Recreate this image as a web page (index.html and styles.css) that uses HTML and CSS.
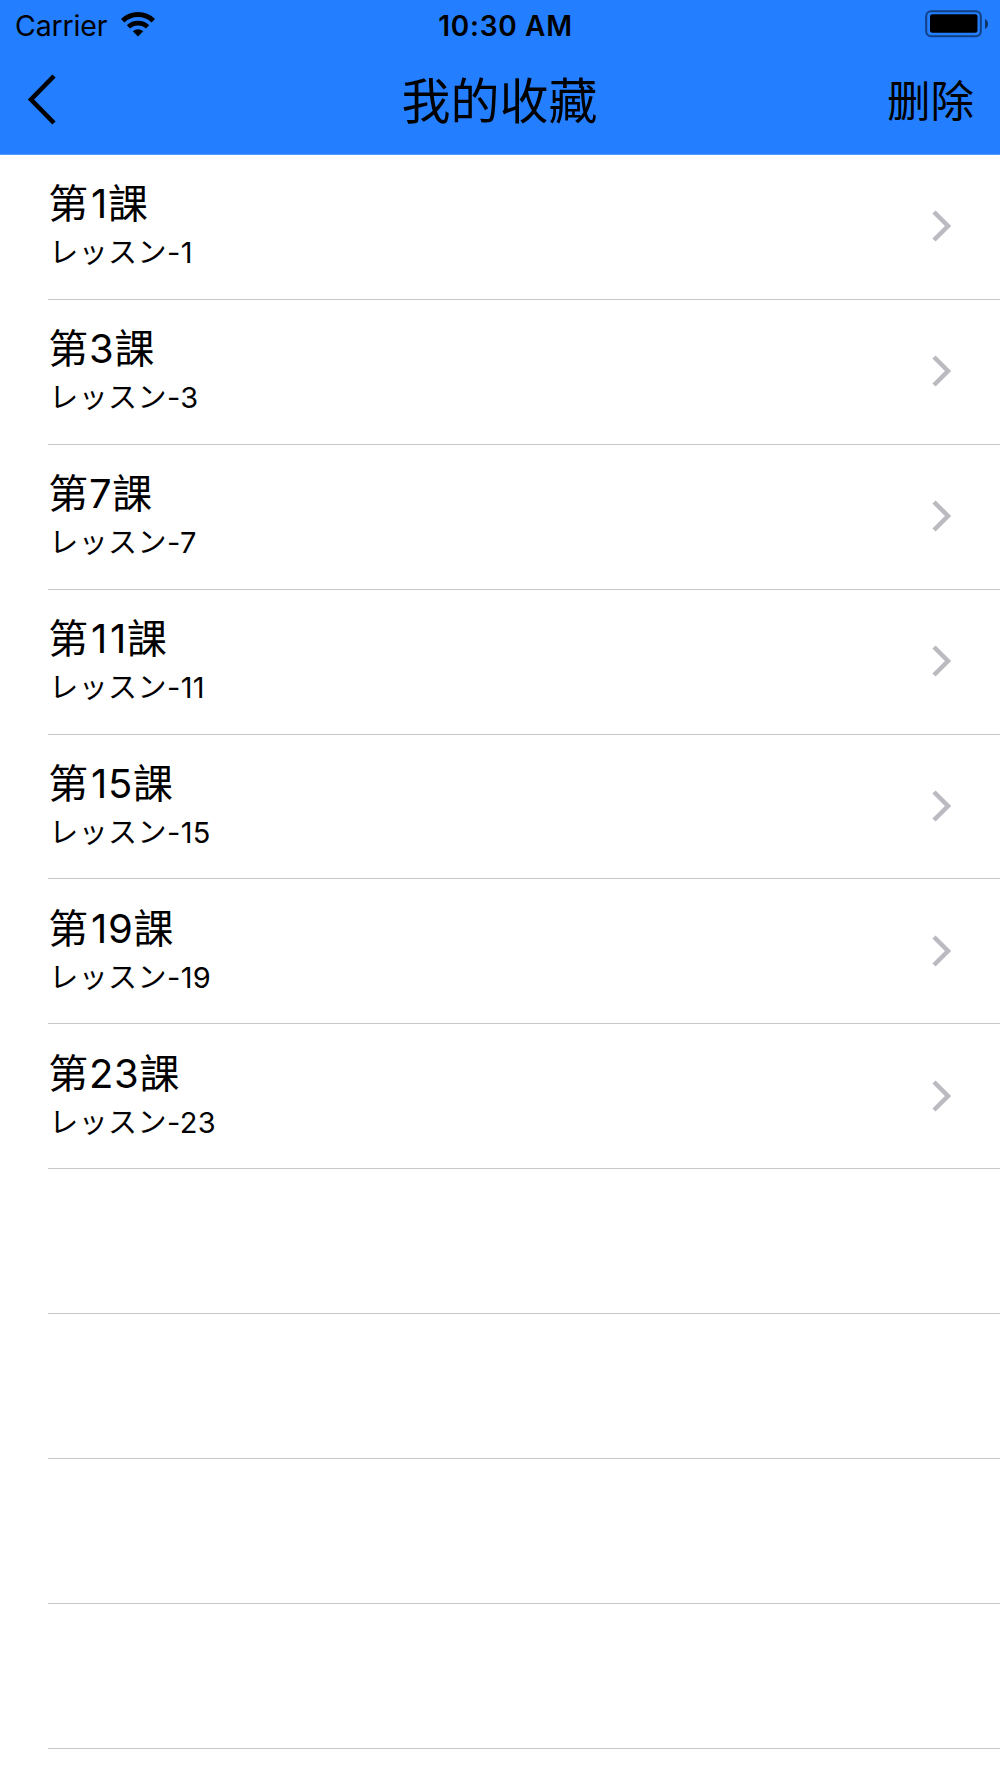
FILE: index.html
```html
<!DOCTYPE html>
<html lang="zh-CN">
<head>
<meta charset="utf-8">
<title>我的收藏</title>
<link rel="stylesheet" href="styles.css">
</head>
<body>
<header class="header">
  <div class="status">
    <div class="network">
      <span class="carrier">Carrier</span>
      <svg class="wifi" width="34" height="25" viewBox="0 0 34 25" fill="none" stroke="#000">
        <path d="M1.7 8.7a22 22 0 0 1 30.6 0" stroke-width="4.9"/>
        <path d="M7.4 14.9a14 14 0 0 1 19.2 0" stroke-width="4.7"/>
        <path d="M17 24.5l-5.2-5.3a7.6 7.6 0 0 1 10.4 0z" fill="#000" stroke="none"/>
      </svg>
    </div>
    <span class="time">10:30 AM</span>
    <svg class="battery" width="64" height="28" viewBox="0 0 64 28">
      <rect x="1.2" y="1.2" width="54.6" height="25" rx="5" fill="none" stroke="#000" stroke-opacity=".5" stroke-width="2"/>
      <rect x="5" y="4.3" width="47.5" height="18.5" rx="2.4"/>
      <path d="M60 9q3 1.3 3 5t-3 5z" fill-opacity=".6"/>
    </svg>
  </div>
  <nav class="nav">
    <svg class="back" width="30" height="52" viewBox="0 0 30 52" fill="none" stroke="#000" stroke-width="4.6"><path d="M27 2L4 25.5 27 49"/></svg>
    <h1 class="title">我的收藏</h1>
    <span class="delete">删除</span>
  </nav>
</header>
<main class="list">
  <div class="row"><div class="text"><div class="name">第<span class="one">1</span>課</div><div class="detail">レッスン-1</div></div><svg class="chevron" width="20" height="32" viewBox="0 0 20 32"><path d="M2 2l14 14L2 30"/></svg></div>
  <div class="row"><div class="text"><div class="name">第3課</div><div class="detail">レッスン-3</div></div><svg class="chevron" width="20" height="32" viewBox="0 0 20 32"><path d="M2 2l14 14L2 30"/></svg></div>
  <div class="row"><div class="text"><div class="name">第7課</div><div class="detail">レッスン-7</div></div><svg class="chevron" width="20" height="32" viewBox="0 0 20 32"><path d="M2 2l14 14L2 30"/></svg></div>
  <div class="row"><div class="text"><div class="name">第<span class="one">1</span><span class="one">1</span>課</div><div class="detail">レッスン-11</div></div><svg class="chevron" width="20" height="32" viewBox="0 0 20 32"><path d="M2 2l14 14L2 30"/></svg></div>
  <div class="row"><div class="text"><div class="name">第<span class="one">1</span>5課</div><div class="detail">レッスン-15</div></div><svg class="chevron" width="20" height="32" viewBox="0 0 20 32"><path d="M2 2l14 14L2 30"/></svg></div>
  <div class="row"><div class="text"><div class="name">第<span class="one">1</span>9課</div><div class="detail">レッスン-19</div></div><svg class="chevron" width="20" height="32" viewBox="0 0 20 32"><path d="M2 2l14 14L2 30"/></svg></div>
  <div class="row"><div class="text"><div class="name">第23課</div><div class="detail">レッスン-23</div></div><svg class="chevron" width="20" height="32" viewBox="0 0 20 32"><path d="M2 2l14 14L2 30"/></svg></div>
  <div class="row"></div>
  <div class="row"></div>
  <div class="row"></div>
  <div class="row"></div>
</main>
</body>
</html>
```

FILE: styles.css
```css
* { box-sizing: border-box; }
body {
  margin: 0;
  height: 1778px;
  overflow: hidden;
  background: #fff;
  color: #000;
  font-family: Inter, "Noto Sans CJK JP", sans-serif;
}
.header {
  height: 155px;
  background: #237fff;
  border-bottom: 1px solid #559cff;
}
.status {
  display: grid;
  grid-template-columns: 1fr auto 1fr;
  align-items: center;
  height: 49px;
  padding: 3px 11px 0 15px;
}
.network { display: flex; align-items: center; gap: 14px; }
.carrier { font-size: 28.5px; line-height: 34px; letter-spacing: -.15px; }
.wifi { margin-bottom: 3px; }
.time { font-size: 28px; line-height: 34px; font-weight: 600; letter-spacing: .7px; margin-left: 7px; }
.battery { justify-self: end; margin-bottom: 4px; }
.nav {
  display: grid;
  grid-template-columns: 1fr auto 1fr;
  align-items: center;
  height: 105px;
  padding: 0 26px 0 27px;
  font-family: "Noto Sans CJK SC", sans-serif;
}
.back { margin-bottom: 4px; }
.title { margin: 0 2px 7px 0; font-size: 49px; line-height: 60px; font-weight: 400; }
.delete { justify-self: end; margin-bottom: 5px; font-size: 43.5px; line-height: 60px; font-weight: 400; }
.row {
  display: flex;
  justify-content: space-between;
  align-items: center;
  height: 144.9px;
  margin-left: 48.3px;
  padding-right: 48.5px;
  border-bottom: 1px solid #c8c7cc;
}
.text { padding-top: 1px; }
.name { font-size: 40px; line-height: 52px; letter-spacing: .7px; }
.one { padding-left: 2px; }
.detail { padding-left: 1px; font-size: 29px; line-height: 46px; letter-spacing: .4px; }
.chevron { margin-bottom: 1.5px; fill: none; stroke: #bbbac1; stroke-width: 4.5; }
```
